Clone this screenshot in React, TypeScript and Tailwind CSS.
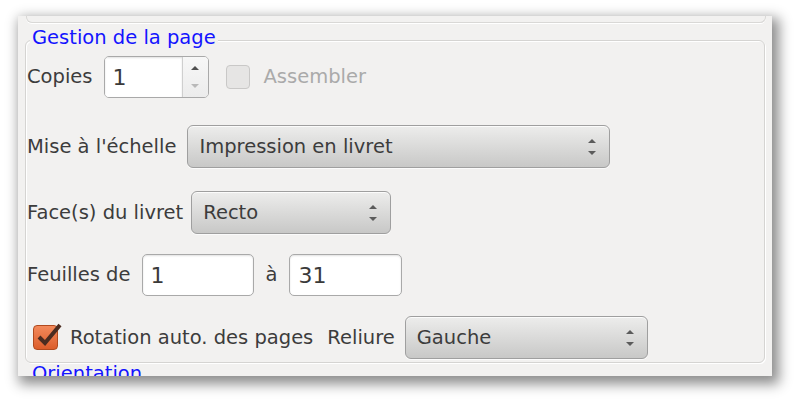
import React from 'react';

const font = { fontFamily: '"DejaVu Sans", "Liberation Sans", sans-serif' };

const ComboArrows: React.FC = () => (
  <svg width="10" height="20" viewBox="0 0 10 20" className="shrink-0">
    <path d="M1 6 L5 2 L9 6 Z" fill="#5b5b5b" />
    <path d="M1 14 L5 18 L9 14 Z" fill="#5b5b5b" />
  </svg>
);

const Combo: React.FC<{ text: string; width: string }> = ({ text, width }) => (
  <div
    className={`${width} h-[43px] flex items-center justify-between pl-[11px] pr-[12px] rounded-[6px] border border-[#9f9f9f] bg-gradient-to-b from-[#ededec] to-[#c8c8c7] shadow-[inset_0_1px_0_rgba(255,255,255,0.8),0_1px_0_rgba(255,255,255,0.7)] text-[19.5px] text-[#3c3c3c]`}
  >
    <span>{text}</span>
    <ComboArrows />
  </div>
);

const Entry: React.FC<{ value: string; width: string }> = ({ value, width }) => (
  <div
    className={`${width} h-[42px] flex items-center pl-[8px] bg-white rounded-[5px] border border-[#a9a9a9] shadow-[inset_0_1px_2px_rgba(0,0,0,0.12)] text-[22px] text-[#3a3a3a]`}
  >
    {value}
  </div>
);

export default function App() {
  return (
    <div className="w-[800px] h-[404px] bg-white pt-[16px] pl-[18px]" style={font}>
      <div className="w-[754px] h-[360px] bg-[#f2f1f0] overflow-hidden shadow-[4px_5px_12px_3px_rgba(0,0,0,0.45)] flex flex-col">
        {/* bottom of the previous group */}
        <div className="ml-[8px] mr-[6px] h-[7px] shrink-0 border-x border-b border-[#d9d8d6] rounded-b-[6px] shadow-[0_1px_0_#ffffff]" />

        {/* Gestion de la page */}
        <div className="relative ml-[7px] mr-[7px] mt-[17px] shrink-0 border border-[#d5d4d2] rounded-[6px] shadow-[inset_1px_1px_0_#ffffff,1px_1px_0_#ffffff] pl-[1px] pb-[3px] flex flex-col text-[19.5px] text-[#3c3c3c]">
          <span className="absolute left-[4px] top-[-13px] px-[2px] bg-[#f2f1f0] leading-[19px] text-[#1414ff]">
            Gestion de la page
          </span>

          {/* Copies */}
          <div className="mt-[15px] h-[42px] flex items-center">
            <span>Copies</span>
            <div className="ml-[11px] w-[105px] h-[42px] flex rounded-[5px] border border-[#a9a9a9] overflow-hidden">
              <div className="w-[77px] flex items-center pl-[8px] bg-white shadow-[inset_0_1px_2px_rgba(0,0,0,0.12)] text-[22px] text-[#3a3a3a]">
                1
              </div>
              <div className="flex-1 border-l border-[#cfcfcf] bg-gradient-to-b from-[#f7f7f7] to-[#ececec] flex flex-col items-center justify-between py-[8px]">
                <svg width="10" height="6" viewBox="0 0 10 6">
                  <path d="M1 5 L5 1 L9 5 Z" fill="#4f4f4f" />
                </svg>
                <svg width="10" height="6" viewBox="0 0 10 6">
                  <path d="M1 1 L5 5 L9 1 Z" fill="#b9b9b9" />
                </svg>
              </div>
            </div>
            <div className="ml-[17px] w-[24px] h-[24px] rounded-[4px] border border-[#c9c8c7] bg-[#e6e5e4]" />
            <span className="ml-[14px] text-[#aaaaaa]">Assembler</span>
          </div>

          {/* Mise à l'échelle */}
          <div className="mt-[27px] flex items-center">
            <span>Mise à l'échelle</span>
            <div className="ml-[11px]">
              <Combo text="Impression en livret" width="w-[423px]" />
            </div>
          </div>

          {/* Face(s) du livret */}
          <div className="mt-[23px] flex items-center">
            <span>Face(s) du livret</span>
            <div className="ml-[8px]">
              <Combo text="Recto" width="w-[200px]" />
            </div>
          </div>

          {/* Feuilles */}
          <div className="mt-[20px] flex items-center">
            <span>Feuilles de</span>
            <div className="ml-[11px]">
              <Entry value="1" width="w-[112px]" />
            </div>
            <span className="ml-[12px]">à</span>
            <div className="ml-[12px]">
              <Entry value="31" width="w-[113px]" />
            </div>
          </div>

          {/* Rotation + Reliure */}
          <div className="mt-[20px] flex items-center">
            <div className="relative ml-[6px] w-[25px] h-[25px] rounded-[4px] border border-[#b04a1f] bg-gradient-to-b from-[#f3895a] to-[#dc5d2a]">
              <svg className="absolute left-[2px] top-[-4px]" width="26" height="26" viewBox="0 0 26 26">
                <path d="M3 15 L9 21 L24 3" fill="none" stroke="#4b2c20" strokeWidth="4" strokeLinejoin="miter" />
              </svg>
            </div>
            <span className="ml-[12px]">Rotation auto. des pages</span>
            <span className="ml-[14px]">Reliure</span>
            <div className="ml-[10px]">
              <Combo text="Gauche" width="w-[243px]" />
            </div>
          </div>
        </div>

        {/* Orientation (cut off by the window edge) */}
        <div className="ml-[14px] mt-[1px] text-[19.5px] leading-[19px] text-[#1414ff]">Orientation</div>
      </div>
    </div>
  );
}
